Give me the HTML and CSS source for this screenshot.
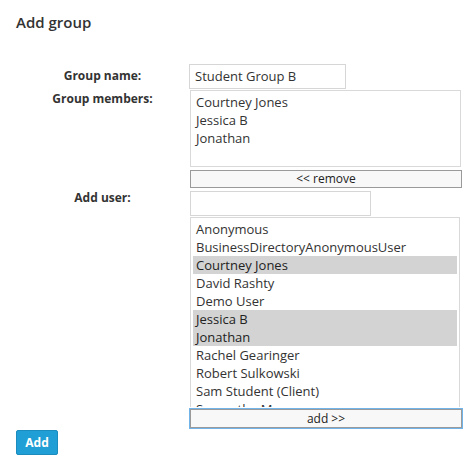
FILE: index.html
```html
<!DOCTYPE html>
<html>
<head>
<meta charset="utf-8">
<link rel="stylesheet" href="styles.css">
</head>
<body>
<div class="page">
  <h1 class="title">Add group</h1>
  <div class="form">
    <div class="label label-name">Group name:</div>
    <div class="field">
      <div class="input input-name">Student Group B</div>
    </div>

    <div class="label label-members">Group members:</div>
    <div class="field">
      <div class="list list-members">
        <div class="opt">Courtney Jones</div>
        <div class="opt">Jessica B</div>
        <div class="opt">Jonathan</div>
      </div>
      <div class="btn btn-remove">&lt;&lt; remove</div>
    </div>

    <div class="label label-add">Add user:</div>
    <div class="field">
      <div class="input input-user"></div>
      <div class="list list-users">
        <div class="opt">Anonymous</div>
        <div class="opt">BusinessDirectoryAnonymousUser</div>
        <div class="opt sel">Courtney Jones</div>
        <div class="opt">David Rashty</div>
        <div class="opt">Demo User</div>
        <div class="opt sel">Jessica B</div>
        <div class="opt sel">Jonathan</div>
        <div class="opt">Rachel Gearinger</div>
        <div class="opt">Robert Sulkowski</div>
        <div class="opt">Sam Student (Client)</div>
        <div class="opt">Samantha Moon</div>
      </div>
      <div class="btn btn-add">add &gt;&gt;</div>
    </div>
  </div>
  <div class="submit">Add</div>
</div>
</body>
</html>
```

FILE: styles.css
```css
html, body {
  margin: 0;
  padding: 0;
  background: #fff;
}
body {
  font-family: "Open Sans", "DejaVu Sans", sans-serif;
  color: #333;
}
.page {
  padding: 11px 0 0 16px;
}
.title {
  margin: 0;
  font-size: 15px;
  line-height: 22px;
  font-weight: 600;
  color: #333;
}
.form {
  margin-top: 31px;
  display: grid;
  grid-template-columns: 173px 274px;
  row-gap: 1px;
}
.label {
  font-size: 12px;
  font-weight: 700;
  line-height: 18px;
  text-align: center;
  color: #333;
}
.label-name { padding-top: 3px; }
.label-members { padding-top: 0; }
.label-add { padding-top: 0; }
.field {
  display: flex;
  flex-direction: column;
  align-items: flex-start;
}
.input {
  box-sizing: border-box;
  height: 25px;
  border: 1px solid #d6d6d6;
  font-size: 13px;
  line-height: 23px;
  padding: 0 5px;
  color: #333;
}
.input-name {
  width: 157px;
}
.input-user {
  width: 181px;
  margin-left: 1px;
  margin-top: 2px;
}
.list {
  box-sizing: border-box;
  border: 1px solid #d9d9d9;
  padding: 2px;
  margin-left: 1px;
  overflow: hidden;
}
.list-members {
  width: 271px;
  height: 77px;
}
.list-users {
  width: 270px;
  height: 190px;
  margin-top: 1px;
  border-bottom: none;
}
.opt {
  font-size: 13px;
  line-height: 18px;
  height: 18px;
  padding-left: 3px;
  white-space: nowrap;
  color: #333;
}
.opt.sel {
  background: #d3d3d3;
  color: #222;
}
.btn {
  box-sizing: border-box;
  border: 1px solid #9a9a9a;
  background: #f8f8f8;
  font-size: 12px;
  text-align: center;
  color: #222;
}
.btn-remove {
  width: 272px;
  height: 18px;
  line-height: 16px;
  margin-left: 1px;
  margin-top: 3px;
}
.btn-add {
  width: 272px;
  height: 19px;
  line-height: 17px;
  margin-left: 1px;
  margin-top: 2px;
  box-shadow: 0 0 0 1px #70b4ea;
}
.submit {
  box-sizing: border-box;
  margin-top: 2px;
  width: 42px;
  height: 25px;
  background: #1f9fd5;
  border: 1px solid #1b8cbd;
  border-radius: 2px;
  color: #fff;
  font-size: 12px;
  font-weight: 700;
  line-height: 23px;
  text-align: center;
}
```
